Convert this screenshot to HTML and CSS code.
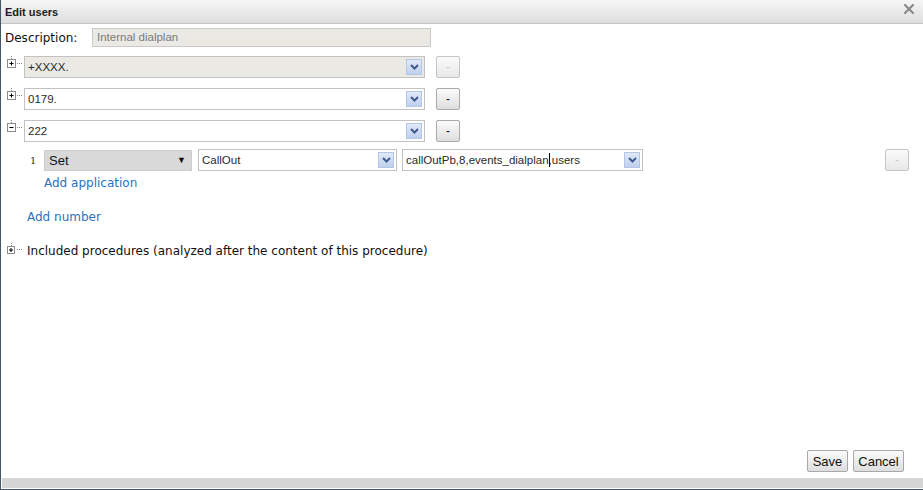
FILE: index.html
```html
<!DOCTYPE html>
<html>
<head>
<meta charset="utf-8">
<link rel="stylesheet" href="styles.css">
</head>
<body>
<div class="dialog">
  <div class="titlebar">
    <span class="title">Edit users</span>
    <svg class="close" width="10" height="10" viewBox="0 0 10 10"><path d="M1 1 L9 9 M9 1 L1 9" stroke="#8a8a8a" stroke-width="2.2" stroke-linecap="square"/></svg>
  </div>
  <div class="content">
    <div class="desc-row">
      <span class="label">Description:</span>
      <div class="input disabled">Internal dialplan</div>
    </div>

    <div class="num-row first">
      <svg class="tree" width="19" height="22" viewBox="0 0 19 22"><path d="M6.5 0v1M6.5 2v1M6.5 4v1M12 7.5h1M14 7.5h1M16 7.5h1" stroke="#888" stroke-width="1"/><rect x="2.5" y="3.5" width="8" height="8" fill="#fff" stroke="#8c8c8c"/><path d="M4.5 7.5h4M6.5 5.5v4" stroke="#000"/></svg>
      <div class="select num disabled"><span class="sel-text">+XXXX.</span><span class="arrow"><svg width="9" height="6" viewBox="0 0 9 6"><path d="M1 1 L4.5 4.5 L8 1" fill="none" stroke="#3f5a8c" stroke-width="2"/></svg></span></div>
      <div class="btn small off">-</div>
    </div>

    <div class="num-row">
      <svg class="tree" width="19" height="22" viewBox="0 0 19 22"><path d="M6.5 0v1M6.5 2v1M6.5 4v1M12 7.5h1M14 7.5h1M16 7.5h1" stroke="#888" stroke-width="1"/><rect x="2.5" y="3.5" width="8" height="8" fill="#fff" stroke="#8c8c8c"/><path d="M4.5 7.5h4M6.5 5.5v4" stroke="#000"/></svg>
      <div class="select num"><span class="sel-text">0179.</span><span class="arrow"><svg width="9" height="6" viewBox="0 0 9 6"><path d="M1 1 L4.5 4.5 L8 1" fill="none" stroke="#3f5a8c" stroke-width="2"/></svg></span></div>
      <div class="btn small">-</div>
    </div>

    <div class="num-row">
      <svg class="tree" width="19" height="22" viewBox="0 0 19 22"><path d="M6.5 0v1M6.5 2v1M6.5 4v1M12 7.5h1M14 7.5h1M16 7.5h1" stroke="#888" stroke-width="1"/><rect x="2.5" y="3.5" width="8" height="8" fill="#fff" stroke="#8c8c8c"/><path d="M4.5 7.5h4" stroke="#000"/></svg>
      <div class="select num"><span class="sel-text">222</span><span class="arrow"><svg width="9" height="6" viewBox="0 0 9 6"><path d="M1 1 L4.5 4.5 L8 1" fill="none" stroke="#3f5a8c" stroke-width="2"/></svg></span></div>
      <div class="btn small">-</div>
    </div>

    <div class="app-row">
      <span class="idx">1</span>
      <div class="setbox"><span>Set</span><span class="tri">&#9660;</span></div>
      <div class="select app1"><span class="sel-text">CallOut</span><span class="arrow"><svg width="9" height="6" viewBox="0 0 9 6"><path d="M1 1 L4.5 4.5 L8 1" fill="none" stroke="#3f5a8c" stroke-width="2"/></svg></span></div>
      <div class="select app2"><span class="sel-text">callOutPb,8,events_dialplan<span class="caret"></span>,users</span><span class="arrow"><svg width="9" height="6" viewBox="0 0 9 6"><path d="M1 1 L4.5 4.5 L8 1" fill="none" stroke="#3f5a8c" stroke-width="2"/></svg></span></div>
      <div class="spacer"></div>
      <div class="btn small off">-</div>
    </div>

    <a class="link add-app" href="#">Add application</a>
    <a class="link add-num" href="#">Add number</a>

    <div class="incl-row">
      <svg class="tree" width="19" height="16" viewBox="0 0 19 16"><path d="M6.5 0v1M6.5 2v1M12 6.5h1M14 6.5h1M16 6.5h1" stroke="#888" stroke-width="1"/><rect x="2.5" y="3.5" width="7" height="7" fill="#fff" stroke="#8c8c8c"/><path d="M4 7h4M6 5v4" stroke="#000"/></svg>
      <span class="label">Included procedures (analyzed after the content of this procedure)</span>
    </div>
  </div>
  <div class="footer">
    <div class="btn big save">Save</div>
    <div class="btn big cancel">Cancel</div>
  </div>
  <div class="bottombar"></div>
</div>
</body>
</html>
```

FILE: styles.css
```css
html, body {
  margin: 0;
  padding: 0;
  background: #fff;
}
.dialog {
  width: 923px;
  height: 490px;
  box-sizing: border-box;
  border-left: 1px solid #46566a;
  border-bottom: 1px solid #46566a;
  display: flex;
  flex-direction: column;
  font-family: "Liberation Sans", Arial, sans-serif;
  color: #222;
}
.titlebar {
  height: 23px;
  border-bottom: 1px solid #c4c4c4;
  background: linear-gradient(#f6f6f6, #dedede);
  display: flex;
  align-items: center;
  justify-content: space-between;
  padding: 0 9px 0 4px;
}
.title {
  font-weight: bold;
  font-size: 11px;
  color: #1c1c1c;
}
.close {
  margin-top: -5px;
}
.content {
  flex: 1;
  padding: 4px 0 0 4px;
  display: flex;
  flex-direction: column;
  align-items: flex-start;
}
.label {
  font-family: "DejaVu Sans", Verdana, sans-serif;
  font-size: 12px;
  color: #111;
}
.desc-row {
  display: flex;
  align-items: center;
  height: 19px;
}
.desc-row .label {
  width: 87px;
}
.input {
  box-sizing: border-box;
  width: 339px;
  height: 19px;
  border: 1px solid #cacaca;
  font-size: 11.5px;
  color: #7a7a7a;
  padding: 0 4px;
  line-height: 17px;
}
.disabled {
  background: #ebe9e4;
}
.num-row {
  display: flex;
  align-items: flex-start;
  margin-top: 10px;
  height: 22px;
}
.num-row.first {
  margin-top: 9px;
}
.tree {
  flex: none;
}
.select {
  box-sizing: border-box;
  height: 22px;
  border: 1px solid #c2c2c2;
  display: flex;
  align-items: center;
  justify-content: space-between;
  padding: 0 2px 0 3px;
  font-size: 11.5px;
  color: #2a2a2a;
  background: #fff;
}
.select.disabled {
  background: #ebe9e4;
}
.select.num {
  width: 401px;
}
.arrow {
  box-sizing: border-box;
  width: 16px;
  height: 16px;
  border: 1px solid #b3c6e6;
  background: linear-gradient(#e0e9f8, #bfd0ef);
  display: flex;
  align-items: center;
  justify-content: center;
}
.btn {
  box-sizing: border-box;
  border: 1px solid #a9a9a9;
  border-radius: 2px;
  background: linear-gradient(#fbfbfb, #dedede);
  display: flex;
  align-items: center;
  justify-content: center;
  color: #111;
}
.btn.small {
  width: 24px;
  height: 22px;
  margin-left: 11px;
  font-size: 12px;
}
.btn.small.off {
  color: #c8c8c8;
  border-color: #c4c4c4;
  background: linear-gradient(#fafafa, #e8e8e8);
}
.app-row {
  display: flex;
  align-items: center;
  margin-top: 7px;
  height: 22px;
  width: 904px;
}
.idx {
  font-family: "DejaVu Serif", "Liberation Serif", serif;
  font-size: 9px;
  width: 39px;
  text-align: right;
  padding-right: 8px;
  box-sizing: border-box;
  margin-top: 2px;
}
.setbox {
  box-sizing: border-box;
  width: 148px;
  height: 21px;
  background: #d9d9d9;
  border: 1px solid #cdcdcd;
  display: flex;
  align-items: center;
  justify-content: space-between;
  padding: 0 5px 0 4px;
  font-size: 13px;
  color: #111;
}
.tri {
  font-size: 9px;
}
.select.app1 {
  width: 199px;
  margin-left: 6px;
}
.select.app2 {
  width: 241px;
  margin-left: 5px;
}
.caret {
  display: inline-block;
  width: 1px;
  height: 14px;
  background: #000;
  vertical-align: -3px;
  margin-right: -1px;
}
.spacer {
  flex: 1;
}
.app-row .btn.small {
  margin-left: 0;
}
.link {
  font-family: "DejaVu Sans", Verdana, sans-serif;
  font-size: 12px;
  color: #2a72c0;
  text-decoration: none;
  line-height: 16px;
}
.add-app {
  margin: 4px 0 0 39px;
}
.add-num {
  margin: 18px 0 0 22px;
}
.incl-row {
  display: flex;
  align-items: center;
  margin-top: 18px;
  height: 16px;
}
.incl-row .tree {
  margin-right: 3px;
}
.footer {
  display: flex;
  justify-content: flex-end;
  padding: 0 19px 6px 0;
  gap: 5px;
}
.btn.big {
  height: 22px;
  font-size: 13px;
}
.save {
  width: 41px;
}
.cancel {
  width: 51px;
}
.bottombar {
  height: 10px;
  margin-left: 1px;
  background: #d6d6d6;
  border-bottom: 1px solid #fff;
}
```
